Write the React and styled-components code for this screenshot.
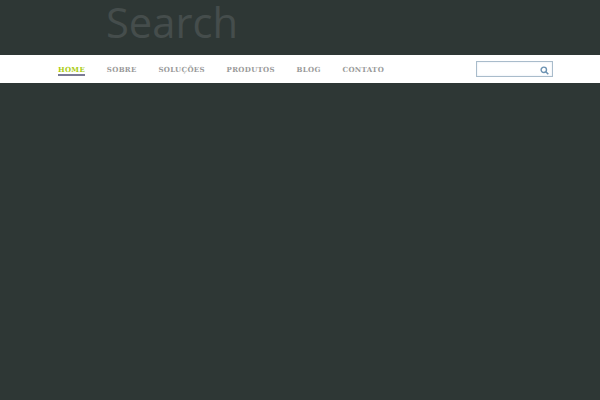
import React from "react";
import styled, { createGlobalStyle } from "styled-components";

const Global = createGlobalStyle`
  html, body { margin: 0; padding: 0; background: #2e3735; }
  body { width: 600px; height: 400px; overflow: hidden; }
`;

const Page = styled.div`
  width: 600px;
  height: 400px;
  background: #2e3735;
  display: flex;
  flex-direction: column;
`;

const Masthead = styled.header`
  height: 55px;
  padding-left: 106px;
  box-sizing: border-box;
`;

const SearchTitle = styled.div`
  font-family: "Open Sans", "Noto Sans", sans-serif;
  font-size: 41.7px;
  line-height: 44px;
  color: #454d4c;
`;

const NavBar = styled.nav`
  height: 28px;
  background: #fff;
  display: flex;
  align-items: center;
  justify-content: space-between;
  padding: 0 47px 0 58px;
`;

const Menu = styled.ul`
  display: flex;
  gap: 21.7px;
  list-style: none;
  margin: 0;
  padding: 0;
`;

const MenuItem = styled.li`
  font-family: "DejaVu Serif", serif;
  font-size: 7px;
  font-weight: 700;
  letter-spacing: 0.33px;
  line-height: 9px;
  padding-top: 3px;
  color: ${(p) => (p.$active ? "#a9cc10" : "#999999")};
  border-bottom: 2px solid ${(p) => (p.$active ? "#7b7b96" : "transparent")};
`;

const SearchBox = styled.div`
  width: 77px;
  height: 16px;
  box-sizing: border-box;
  border: 1px solid #a9bccb;
  box-shadow: inset 0 0 2px #dbe5ee;
  display: flex;
  align-items: center;
  justify-content: flex-end;
  padding: 3px 3px 0 0;
`;

const Lens = styled.svg`
  width: 9px;
  height: 9px;
  display: block;
`;

const items = ["HOME", "SOBRE", "SOLUÇÕES", "PRODUTOS", "BLOG", "CONTATO"];

export default function App() {
  return (
    <Page>
      <Global />
      <Masthead>
        <SearchTitle>Search</SearchTitle>
      </Masthead>
      <NavBar>
        <Menu>
          {items.map((t, i) => (
            <MenuItem key={t} $active={i === 0}>{t}</MenuItem>
          ))}
        </Menu>
        <SearchBox>
          <Lens viewBox="0 0 9 9">
            <circle cx="3.8" cy="3.8" r="2.7" fill="none" stroke="#6c92b2" strokeWidth="1.4" />
            <line x1="5.8" y1="5.8" x2="8.3" y2="8.3" stroke="#6c92b2" strokeWidth="1.6" />
          </Lens>
        </SearchBox>
      </NavBar>
    </Page>
  );
}
